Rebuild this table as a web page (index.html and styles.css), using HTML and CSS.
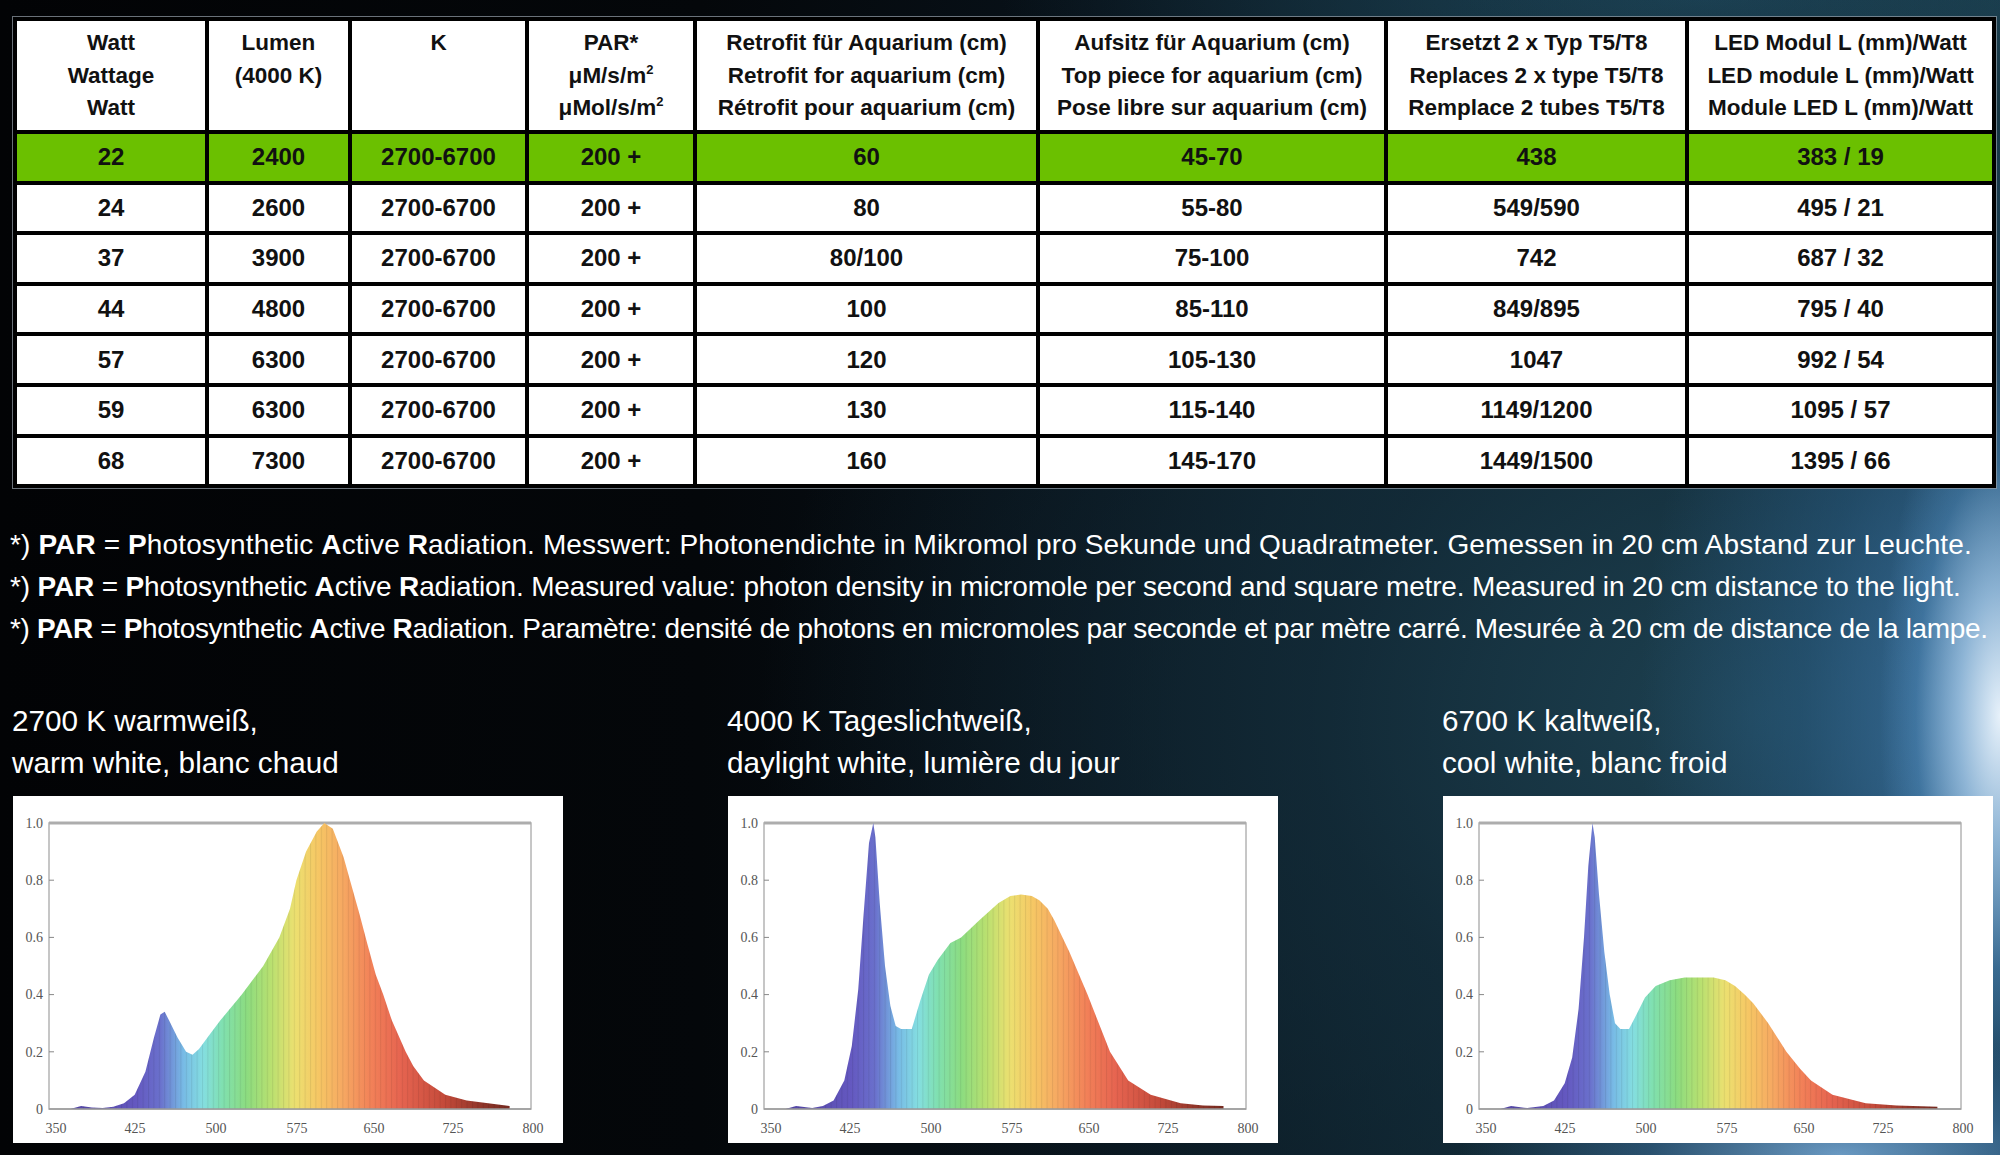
FILE: index.html
```html
<!DOCTYPE html>
<html lang="de">
<head>
<meta charset="utf-8">
<title>LED Spezifikation</title>
<link rel="stylesheet" href="styles.css">
</head>
<body>
<main class="page">
  <table class="spec">
    <colgroup>
      <col class="c1"><col class="c2"><col class="c3"><col class="c4"><col class="c5"><col class="c6"><col class="c7"><col class="c8">
    </colgroup>
    <thead>
      <tr>
        <th>Watt<br>Wattage<br>Watt</th>
        <th>Lumen<br>(4000 K)</th>
        <th>K</th>
        <th>PAR*<br>μM/s/m<sup>2</sup><br>μMol/s/m<sup>2</sup></th>
        <th>Retrofit für Aquarium (cm)<br>Retrofit for aquarium (cm)<br>Rétrofit pour aquarium (cm)</th>
        <th>Aufsitz für Aquarium (cm)<br>Top piece for aquarium (cm)<br>Pose libre sur aquarium (cm)</th>
        <th>Ersetzt 2 x Typ T5/T8<br>Replaces 2 x type T5/T8<br>Remplace 2 tubes T5/T8</th>
        <th>LED Modul L (mm)/Watt<br>LED module L (mm)/Watt<br>Module LED L (mm)/Watt</th>
      </tr>
    </thead>
    <tbody>
      <tr class="hl"><td>22</td><td>2400</td><td>2700-6700</td><td>200 +</td><td>60</td><td>45-70</td><td>438</td><td>383 / 19</td></tr>
      <tr><td>24</td><td>2600</td><td>2700-6700</td><td>200 +</td><td>80</td><td>55-80</td><td>549/590</td><td>495 / 21</td></tr>
      <tr><td>37</td><td>3900</td><td>2700-6700</td><td>200 +</td><td>80/100</td><td>75-100</td><td>742</td><td>687 / 32</td></tr>
      <tr><td>44</td><td>4800</td><td>2700-6700</td><td>200 +</td><td>100</td><td>85-110</td><td>849/895</td><td>795 / 40</td></tr>
      <tr><td>57</td><td>6300</td><td>2700-6700</td><td>200 +</td><td>120</td><td>105-130</td><td>1047</td><td>992 / 54</td></tr>
      <tr><td>59</td><td>6300</td><td>2700-6700</td><td>200 +</td><td>130</td><td>115-140</td><td>1149/1200</td><td>1095 / 57</td></tr>
      <tr><td>68</td><td>7300</td><td>2700-6700</td><td>200 +</td><td>160</td><td>145-170</td><td>1449/1500</td><td>1395 / 66</td></tr>
    </tbody>
  </table>

  <div class="notes">
    <p class="de">*) <b>PAR</b> = <b>P</b>hotosynthetic <b>A</b>ctive <b>R</b>adiation. Messwert: Photonendichte in Mikromol pro Sekunde und Quadratmeter. Gemessen in 20 cm Abstand zur Leuchte.</p>
    <p class="en">*) <b>PAR</b> = <b>P</b>hotosynthetic <b>A</b>ctive <b>R</b>adiation. Measured value: photon density in micromole per second and square metre. Measured in 20 cm distance to the light.</p>
    <p class="fr">*) <b>PAR</b> = <b>P</b>hotosynthetic <b>A</b>ctive <b>R</b>adiation. Paramètre: densité de photons en micromoles par seconde et par mètre carré. Mesurée à 20 cm de distance de la lampe.</p>
  </div>

  <section class="spectra">
    <figure class="spectrum">
      <figcaption>2700 K warmweiß,<br>warm white, blanc chaud</figcaption>
      <div class="chart">
        <svg viewBox="0 0 550 347" width="550" height="347">
          <defs>
            <linearGradient id="rainbow" gradientUnits="userSpaceOnUse" x1="36" y1="0" x2="518" y2="0">
              <stop offset="0.08" stop-color="#5548a8"/>
              <stop offset="0.18" stop-color="#6458c0"/>
              <stop offset="0.23" stop-color="#6a70cc"/>
              <stop offset="0.28" stop-color="#78bce6"/>
              <stop offset="0.32" stop-color="#84dee0"/>
              <stop offset="0.36" stop-color="#80e0b0"/>
              <stop offset="0.41" stop-color="#8cdc80"/>
              <stop offset="0.46" stop-color="#b8e070"/>
              <stop offset="0.51" stop-color="#ece070"/>
              <stop offset="0.56" stop-color="#f6c664"/>
              <stop offset="0.61" stop-color="#f6a862"/>
              <stop offset="0.67" stop-color="#f28058"/>
              <stop offset="0.73" stop-color="#e66450"/>
              <stop offset="0.82" stop-color="#c44a3a"/>
              <stop offset="0.90" stop-color="#8e3428"/>
              <stop offset="1" stop-color="#62221a"/>
            </linearGradient>
            <pattern id="stripes" patternUnits="userSpaceOnUse" width="5.4" height="10">
              <rect x="0" y="0" width="1" height="10" fill="rgba(0,0,0,0.08)"/>
            </pattern>
          </defs>
          <rect x="36" y="27" width="482" height="286" fill="#fff" stroke="#b4b4b4" stroke-width="1.5"/>
          <line x1="36" y1="27" x2="518" y2="27" stroke="#adadad" stroke-width="3"/>
          <polygon fill="url(#rainbow)" points="57.4,313 68.1,310.1 78.8,311.6 89.6,312.1 100.3,310.7 111,307.3 121.7,298.7 132.4,275.8 141,241.5 147.4,218.6 151.7,215.8 156,224.3 164.5,241.5 173.1,255.8 179.5,258.7 186,253 196.7,238.6 207.4,224.3 228.8,198.6 250.2,170 266.3,141.4 277,112.8 283.4,84.2 293.1,55.6 303.8,35.6 311.3,27 319.8,32.7 330.6,61.3 337,84.2 346.6,118.5 354.1,147.1 362.7,178.6 370.2,198.6 378.8,224.3 392.7,255.8 400.2,270.1 410.9,284.4 432.3,298.7 453.7,304.4 475.2,307.3 496.6,310.1 496.6,313"/>
          <polygon fill="url(#stripes)" points="57.4,313 68.1,310.1 78.8,311.6 89.6,312.1 100.3,310.7 111,307.3 121.7,298.7 132.4,275.8 141,241.5 147.4,218.6 151.7,215.8 156,224.3 164.5,241.5 173.1,255.8 179.5,258.7 186,253 196.7,238.6 207.4,224.3 228.8,198.6 250.2,170 266.3,141.4 277,112.8 283.4,84.2 293.1,55.6 303.8,35.6 311.3,27 319.8,32.7 330.6,61.3 337,84.2 346.6,118.5 354.1,147.1 362.7,178.6 370.2,198.6 378.8,224.3 392.7,255.8 400.2,270.1 410.9,284.4 432.3,298.7 453.7,304.4 475.2,307.3 496.6,310.1 496.6,313"/>
          <line x1="36" y1="313" x2="518" y2="313" stroke="#9a9a9a" stroke-width="1.5"/>
          <g class="ticks" stroke="#888" stroke-width="1">
            <line x1="36" y1="84.2" x2="41" y2="84.2"/><line x1="36" y1="141.4" x2="41" y2="141.4"/><line x1="36" y1="198.6" x2="41" y2="198.6"/><line x1="36" y1="255.8" x2="41" y2="255.8"/>
          </g>
          <g class="ylab">
            <text x="30" y="32">1.0</text><text x="30" y="89">0.8</text><text x="30" y="146">0.6</text><text x="30" y="203">0.4</text><text x="30" y="261">0.2</text><text x="30" y="318">0</text>
          </g>
          <g class="xlab">
            <text x="43" y="337">350</text><text x="122" y="337">425</text><text x="203" y="337">500</text><text x="284" y="337">575</text><text x="361" y="337">650</text><text x="440" y="337">725</text><text x="520" y="337">800</text>
          </g>
        </svg>
      </div>
    </figure>

    <figure class="spectrum">
      <figcaption>4000 K Tageslichtweiß,<br>daylight white, lumière du jour</figcaption>
      <div class="chart">
        <svg viewBox="0 0 550 347" width="550" height="347">
          <rect x="36" y="27" width="482" height="286" fill="#fff" stroke="#b4b4b4" stroke-width="1.5"/>
          <line x1="36" y1="27" x2="518" y2="27" stroke="#adadad" stroke-width="3"/>
          <polygon fill="url(#rainbow)" points="57.4,313 68.1,310.1 84.2,312.1 94.9,310.1 105.6,304.4 116.3,284.4 123.8,250.1 130.3,192.9 135.6,118.5 141,47 145.3,27 147.4,41.3 151.7,107.1 157,170 162.4,210 167.7,230.1 173.1,232.9 183.8,232.9 192.4,204.3 201,178.6 209.5,164.3 222.4,147.1 233.1,141.4 251.3,124.2 270.5,107.1 282.4,99.9 293.1,98.5 303.8,99.9 311.3,104.2 319.8,112.8 326.3,124.2 341.3,155.7 359.5,198.6 382,255.8 400.2,284.4 422.7,298.7 452.7,307.3 475.2,309.6 495.5,310.1 495.5,313"/>
          <polygon fill="url(#stripes)" points="57.4,313 68.1,310.1 84.2,312.1 94.9,310.1 105.6,304.4 116.3,284.4 123.8,250.1 130.3,192.9 135.6,118.5 141,47 145.3,27 147.4,41.3 151.7,107.1 157,170 162.4,210 167.7,230.1 173.1,232.9 183.8,232.9 192.4,204.3 201,178.6 209.5,164.3 222.4,147.1 233.1,141.4 251.3,124.2 270.5,107.1 282.4,99.9 293.1,98.5 303.8,99.9 311.3,104.2 319.8,112.8 326.3,124.2 341.3,155.7 359.5,198.6 382,255.8 400.2,284.4 422.7,298.7 452.7,307.3 475.2,309.6 495.5,310.1 495.5,313"/>
          <line x1="36" y1="313" x2="518" y2="313" stroke="#9a9a9a" stroke-width="1.5"/>
          <g class="ticks" stroke="#888" stroke-width="1">
            <line x1="36" y1="84.2" x2="41" y2="84.2"/><line x1="36" y1="141.4" x2="41" y2="141.4"/><line x1="36" y1="198.6" x2="41" y2="198.6"/><line x1="36" y1="255.8" x2="41" y2="255.8"/>
          </g>
          <g class="ylab">
            <text x="30" y="32">1.0</text><text x="30" y="89">0.8</text><text x="30" y="146">0.6</text><text x="30" y="203">0.4</text><text x="30" y="261">0.2</text><text x="30" y="318">0</text>
          </g>
          <g class="xlab">
            <text x="43" y="337">350</text><text x="122" y="337">425</text><text x="203" y="337">500</text><text x="284" y="337">575</text><text x="361" y="337">650</text><text x="440" y="337">725</text><text x="520" y="337">800</text>
          </g>
        </svg>
      </div>
    </figure>

    <figure class="spectrum">
      <figcaption>6700 K kaltweiß,<br>cool white, blanc froid</figcaption>
      <div class="chart">
        <svg viewBox="0 0 550 347" width="550" height="347">
          <rect x="36" y="27" width="482" height="286" fill="#fff" stroke="#b4b4b4" stroke-width="1.5"/>
          <line x1="36" y1="27" x2="518" y2="27" stroke="#adadad" stroke-width="3"/>
          <polygon fill="url(#rainbow)" points="57.4,313 68.1,310.1 84.2,312.1 100.3,310.1 111,304.4 121.7,287.3 129.2,261.5 135.6,212.9 141,141.4 145.3,69.9 149.5,27 151.7,41.3 156,98.5 161.3,155.7 166.7,198.6 172,227.2 177.4,232.9 186,232.9 193.5,218.6 202,201.5 212.7,190 226.7,184.3 241.7,181.4 270.5,181.4 282.4,184.3 292,190 301.6,198.6 310.2,207.2 325.2,227.2 343.4,255.8 357.3,273 368,284.4 389.5,298.7 422.7,307.3 453.7,309.6 494.4,310.7 494.4,313"/>
          <polygon fill="url(#stripes)" points="57.4,313 68.1,310.1 84.2,312.1 100.3,310.1 111,304.4 121.7,287.3 129.2,261.5 135.6,212.9 141,141.4 145.3,69.9 149.5,27 151.7,41.3 156,98.5 161.3,155.7 166.7,198.6 172,227.2 177.4,232.9 186,232.9 193.5,218.6 202,201.5 212.7,190 226.7,184.3 241.7,181.4 270.5,181.4 282.4,184.3 292,190 301.6,198.6 310.2,207.2 325.2,227.2 343.4,255.8 357.3,273 368,284.4 389.5,298.7 422.7,307.3 453.7,309.6 494.4,310.7 494.4,313"/>
          <line x1="36" y1="313" x2="518" y2="313" stroke="#9a9a9a" stroke-width="1.5"/>
          <g class="ticks" stroke="#888" stroke-width="1">
            <line x1="36" y1="84.2" x2="41" y2="84.2"/><line x1="36" y1="141.4" x2="41" y2="141.4"/><line x1="36" y1="198.6" x2="41" y2="198.6"/><line x1="36" y1="255.8" x2="41" y2="255.8"/>
          </g>
          <g class="ylab">
            <text x="30" y="32">1.0</text><text x="30" y="89">0.8</text><text x="30" y="146">0.6</text><text x="30" y="203">0.4</text><text x="30" y="261">0.2</text><text x="30" y="318">0</text>
          </g>
          <g class="xlab">
            <text x="43" y="337">350</text><text x="122" y="337">425</text><text x="203" y="337">500</text><text x="284" y="337">575</text><text x="361" y="337">650</text><text x="440" y="337">725</text><text x="520" y="337">800</text>
          </g>
        </svg>
      </div>
    </figure>
  </section>
</main>
</body>
</html>
```

FILE: styles.css
```css
html, body {
  margin: 0;
  padding: 0;
}

body {
  width: 2000px;
  height: 1155px;
  overflow: hidden;
  color: #fff;
  font-family: "Liberation Sans", Arial, sans-serif;
  background-color: #030508;
  background-image:
    radial-gradient(ellipse 120px 360px at 100% 62%, rgba(240, 248, 255, 0.95) 0%, rgba(170, 205, 235, 0.75) 35%, rgba(90, 150, 200, 0.35) 70%, rgba(60, 120, 170, 0) 100%),
    radial-gradient(ellipse 380px 120px at 92% 100%, rgba(120, 170, 215, 0.85) 0%, rgba(70, 125, 175, 0.45) 50%, rgba(40, 90, 130, 0) 100%),
    radial-gradient(ellipse 360px 600px at 100% 62%, rgba(70, 130, 185, 0.8) 0%, rgba(45, 100, 145, 0.45) 55%, rgba(30, 70, 100, 0) 100%),
    radial-gradient(ellipse 1000px 760px at 88% 62%, rgba(30, 66, 82, 0.95) 0%, rgba(20, 46, 60, 0.7) 45%, rgba(10, 22, 30, 0) 100%),
    radial-gradient(ellipse 700px 120px at 85% 0%, rgba(30, 70, 90, 0.8) 0%, rgba(20, 45, 60, 0) 100%),
    linear-gradient(90deg, #020305 0%, #04070a 35%, #08121a 55%, #0f2530 75%, #183845 100%);
}

.page {
  display: flex;
  flex-direction: column;
  padding: 17px 8px 0 13px;
}

/* ---------- table ---------- */
.spec {
  width: 1979px;
  border-collapse: collapse;
  table-layout: fixed;
  border: 4px solid #000;
  outline: 1px solid rgba(150, 160, 170, 0.7);
  color: #111;
  font-weight: bold;
  text-align: center;
}

.spec .c1 { width: 192px; }
.spec .c2 { width: 143px; }
.spec .c3 { width: 177px; }
.spec .c4 { width: 168px; }
.spec .c5 { width: 343px; }
.spec .c6 { width: 348px; }
.spec .c7 { width: 301px; }
.spec .c8 { width: 307px; }

.spec th,
.spec td {
  border: 4px solid #000;
  background: #fff;
  padding: 0;
  white-space: nowrap;
}

.spec th {
  height: 103px;
  vertical-align: top;
  padding-top: 6px;
  font-size: 22.5px;
  line-height: 32.5px;
  font-weight: bold;
}

.spec td {
  height: 46.6px;
  font-size: 24px;
  line-height: 30px;
}

.spec sup {
  font-size: 13px;
  line-height: 0;
  vertical-align: 9px;
}

.spec .hl td {
  background: #6bc000;
}

/* ---------- notes ---------- */
.notes {
  margin-top: 36px;
  margin-left: -3px;
  font-size: 28px;
  line-height: 42px;
  white-space: nowrap;
}

.notes p {
  margin: 0;
}

.notes .de { letter-spacing: 0.12px; }
.notes .en { letter-spacing: -0.16px; }
.notes .fr { letter-spacing: -0.37px; }

.notes b {
  font-weight: bold;
}

/* ---------- spectra ---------- */
.spectra {
  margin-top: 50px;
  display: grid;
  grid-template-columns: 550px 550px 550px;
  column-gap: 165px;
}

.spectrum {
  margin: 0;
  display: flex;
  flex-direction: column;
  gap: 12px;
}

.spectrum figcaption {
  font-size: 29.7px;
  line-height: 42px;
  margin-left: -1px;
}

.chart {
  width: 550px;
  height: 347px;
  background: #fff;
}

.chart svg {
  display: block;
}

.ylab text {
  font-family: "Liberation Serif", serif;
  font-size: 14px;
  fill: #555;
  text-anchor: end;
}

.xlab text {
  font-family: "Liberation Serif", serif;
  font-size: 14px;
  fill: #555;
  text-anchor: middle;
}
```
